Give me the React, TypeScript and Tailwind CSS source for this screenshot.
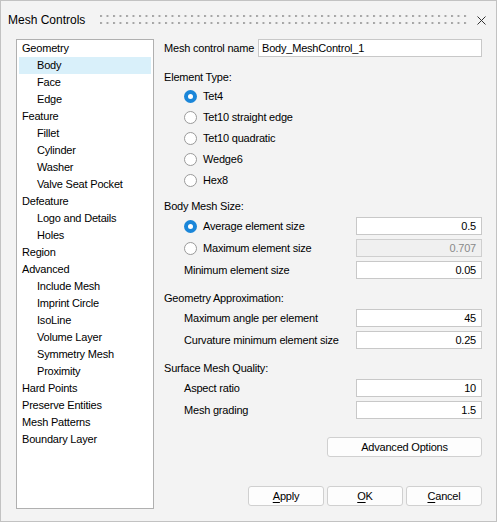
import React from 'react';

const font = "font-['Liberation_Sans',Arial,sans-serif]";

const tree: { label: string; child?: boolean; selected?: boolean }[] = [
  { label: 'Geometry' },
  { label: 'Body', child: true, selected: true },
  { label: 'Face', child: true },
  { label: 'Edge', child: true },
  { label: 'Feature' },
  { label: 'Fillet', child: true },
  { label: 'Cylinder', child: true },
  { label: 'Washer', child: true },
  { label: 'Valve Seat Pocket', child: true },
  { label: 'Defeature' },
  { label: 'Logo and Details', child: true },
  { label: 'Holes', child: true },
  { label: 'Region' },
  { label: 'Advanced' },
  { label: 'Include Mesh', child: true },
  { label: 'Imprint Circle', child: true },
  { label: 'IsoLine', child: true },
  { label: 'Volume Layer', child: true },
  { label: 'Symmetry Mesh', child: true },
  { label: 'Proximity', child: true },
  { label: 'Hard Points' },
  { label: 'Preserve Entities' },
  { label: 'Mesh Patterns' },
  { label: 'Boundary Layer' },
];

function Radio({ checked }: { checked?: boolean }) {
  return checked ? (
    <span className="flex h-[13px] w-[13px] items-center justify-center rounded-full bg-[#1a86d9]">
      <span className="h-[5px] w-[5px] rounded-full bg-white" />
    </span>
  ) : (
    <span className="h-[13px] w-[13px] rounded-full border border-[#9a9a9a] bg-white" />
  );
}

function NumInput({ value, disabled }: { value: string; disabled?: boolean }) {
  return (
    <div
      className={
        'flex h-[18px] w-[126px] items-center justify-end border pr-[5px] ' +
        (disabled ? 'border-[#cfcfcf] bg-[#f0f0f0] text-[#8a8a8a]' : 'border-[#c8c8c8] bg-white text-black')
      }
    >
      {value}
    </div>
  );
}

function Button({ children, className }: { children: React.ReactNode; className?: string }) {
  return (
    <div
      className={
        'flex h-[20px] items-center justify-center rounded-[3px] border border-[#d0d0d0] bg-[#fdfdfd] text-black ' +
        (className ?? '')
      }
    >
      {children}
    </div>
  );
}

export default function App() {
  const elementTypes = ['Tet4', 'Tet10 straight edge', 'Tet10 quadratic', 'Wedge6', 'Hex8'];

  return (
    <div className={`${font} h-[522px] w-[497px] border border-[#c2c2c2] bg-[#f3f3f3] text-[11px] tracking-[-0.2px] text-black`}>
      {/* title bar */}
      <div className="flex h-[38px] items-center">
        <span className="pl-[7px] text-[12px] tracking-normal">Mesh Controls</span>
        <svg className="ml-[15px]" width="370" height="10" viewBox="0 0 370 10">
          <defs>
            <pattern id="grip" width="6.5" height="10" patternUnits="userSpaceOnUse">
              <rect x="0" y="0" width="2" height="2" fill="#a5a5a5" />
              <rect x="0" y="7" width="2" height="2" fill="#a5a5a5" />
            </pattern>
          </defs>
          <rect width="370" height="10" fill="url(#grip)" />
        </svg>
        <svg className="ml-[7px]" width="9" height="9" viewBox="0 0 9 9">
          <path d="M0.5 0.5 L8.5 8.5 M8.5 0.5 L0.5 8.5" stroke="#333" strokeWidth="1" />
        </svg>
      </div>

      <div className="flex pl-[15px]">
        {/* tree */}
        <div className="h-[470px] w-[138px] border border-[#b0b0b0] bg-white">
          {tree.map((t) => (
            <div
              key={t.label}
              className={
                'mx-[2px] flex h-[17px] items-center whitespace-nowrap ' +
                (t.child ? 'pl-[18px] ' : 'pl-[3px] ') +
                (t.selected ? 'bg-[#d9f0fa]' : '')
              }
            >
              {t.label}
            </div>
          ))}
        </div>

        {/* form */}
        <div className="ml-[10px] flex w-[318px] flex-col">
          <div className="flex h-[18px] items-center justify-between">
            <span>Mesh control name</span>
            <div className="flex h-[18px] w-[224px] items-center border border-[#c8c8c8] bg-white pl-[3px]">
              Body_MeshControl_1
            </div>
          </div>

          <div className="mt-[12px] flex h-[17px] items-center">Element Type:</div>
          {elementTypes.map((e, i) => (
            <div key={e} className="flex h-[21px] items-center gap-[6px] pl-[20px]">
              <Radio checked={i === 0} />
              <span>{e}</span>
            </div>
          ))}

          <div className="mt-[7px] flex h-[17px] items-center">Body Mesh Size:</div>
          <div className="flex h-[22px] items-center justify-between">
            <div className="flex items-center gap-[6px] pl-[20px]">
              <Radio checked />
              <span>Average element size</span>
            </div>
            <NumInput value="0.5" />
          </div>
          <div className="flex h-[22px] items-center justify-between">
            <div className="flex items-center gap-[6px] pl-[20px]">
              <Radio />
              <span>Maximum element size</span>
            </div>
            <NumInput value="0.707" disabled />
          </div>
          <div className="flex h-[22px] items-center justify-between">
            <span className="pl-[20px]">Minimum element size</span>
            <NumInput value="0.05" />
          </div>

          <div className="mt-[9px] flex h-[17px] items-center">Geometry Approximation:</div>
          <div className="flex h-[22px] items-center justify-between">
            <span className="pl-[20px]">Maximum angle per element</span>
            <NumInput value="45" />
          </div>
          <div className="flex h-[22px] items-center justify-between">
            <span className="pl-[20px]">Curvature minimum element size</span>
            <NumInput value="0.25" />
          </div>

          <div className="mt-[9px] flex h-[17px] items-center">Surface Mesh Quality:</div>
          <div className="flex h-[22px] items-center justify-between">
            <span className="pl-[20px]">Aspect ratio</span>
            <NumInput value="10" />
          </div>
          <div className="flex h-[22px] items-center justify-between">
            <span className="pl-[20px]">Mesh grading</span>
            <NumInput value="1.5" />
          </div>

          <div className="mt-[16px] flex justify-end">
            <Button className="w-[155px]">Advanced Options</Button>
          </div>

          <div className="mt-[29px] flex justify-end gap-[3px]">
            <Button className="w-[76px]">
              <span className="underline underline-offset-2">A</span>pply
            </Button>
            <Button className="w-[76px]">
              <span className="underline underline-offset-2">O</span>K
            </Button>
            <Button className="w-[76px]">
              <span className="underline underline-offset-2">C</span>ancel
            </Button>
          </div>
        </div>
      </div>
    </div>
  );
}
